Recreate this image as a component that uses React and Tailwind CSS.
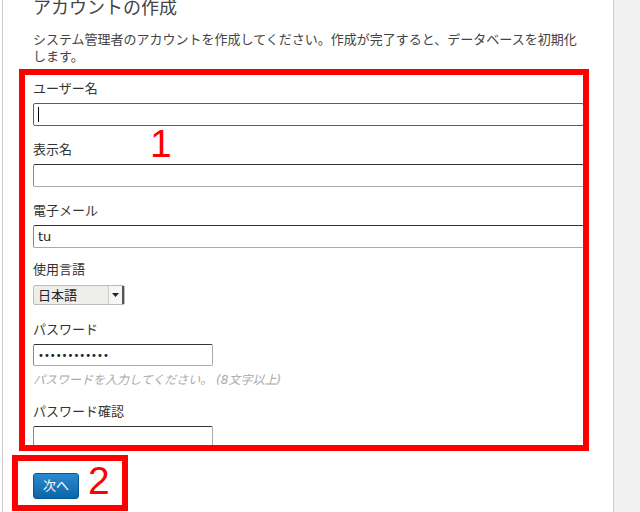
export default function App() {
  const font = { fontFamily: '"DejaVu Sans", "Noto Sans CJK JP", sans-serif' };

  return (
    <div className="relative flex h-[512px] w-[640px] overflow-hidden bg-[#f1f1f1]" style={font}>
      <div className="w-[2px] bg-white" />
      <div className="w-[612px] border-x border-[#cccccc] bg-white pl-[30px] pr-[29px]">
        {/* Title */}
        <h1 className="-mt-[2px] text-[18px] leading-[20px] text-[#444]">アカウントの作成</h1>
        <p className="mt-[13px] text-[13px] leading-[17px] text-[#444]">
          システム管理者のアカウントを作成してください。作成が完了すると、データベースを初期化します。
        </p>

        {/* Username (focused) */}
        <label className="mt-[15px] block text-[13px] leading-[18px] text-[#333]">ユーザー名</label>
        <div className="mt-[5px] flex h-[23px] items-center rounded-[2px] border border-[#1f6fa8] px-[4px]">
          <span className="h-[15px] w-[1px] bg-black" />
        </div>

        {/* Display name */}
        <label className="mt-[15px] block text-[13px] leading-[18px] text-[#333]">表示名</label>
        <div className="mt-[5px] h-[23px] rounded-[2px] border border-[#aaa] border-t-[#333] border-l-[#888]" />

        {/* Email */}
        <label className="mt-[15px] block text-[13px] leading-[18px] text-[#333]">電子メール</label>
        <div className="mt-[5px] flex h-[23px] items-center rounded-[2px] border border-[#aaa] border-t-[#333] border-l-[#888] px-[4px] text-[13px] text-[#222]">
          tu
        </div>

        {/* Language */}
        <label className="mt-[13px] block text-[13px] leading-[18px] text-[#333]">使用言語</label>
        <div className="mt-[6px] flex h-[20px] w-[92px] items-center rounded-[2px] border border-[#bbb] bg-[#ededeb] text-[13px] text-[#222]">
          <span className="flex-1 pl-[4px] leading-none">日本語</span>
          <span className="flex h-full w-[16px] items-center justify-center border-l border-[#ccc] border-r-2 border-r-[#555] bg-[#f6f6f4]">
            <svg width="7" height="4" viewBox="0 0 7 4">
              <path d="M0 0h7L3.5 4z" fill="#222" />
            </svg>
          </span>
        </div>

        {/* Password */}
        <label className="mt-[16px] block text-[13px] leading-[18px] text-[#333]">パスワード</label>
        <div className="mt-[5px] flex h-[22px] w-[180px] items-center rounded-[2px] border border-[#aaa] border-t-[#333] border-l-[#888] px-[4px] text-[10px] text-[#222]">
          ••••••••••••
        </div>
        <p className="mt-[6px] text-[12px] italic leading-[16px] text-[#aaa]">
          パスワードを入力してください。 <span className="text-[12px]">(8文字以上)</span>
        </p>

        {/* Password confirm */}
        <label className="mt-[15px] block text-[13px] leading-[18px] text-[#333]">パスワード確認</label>
        <div className="mt-[5px] h-[23px] w-[180px] rounded-[2px] border border-[#aaa] border-t-[#333] border-l-[#888]" />

        <button className="mt-[24px] flex h-[26px] w-[46px] items-center justify-center rounded-[3px] border border-[#00588f] bg-gradient-to-b from-[#2a8ad0] to-[#0a66a8] text-[13px] text-white">
          次へ
        </button>
      </div>
      <div className="flex-1" />

      {/* Annotations */}
      <div className="absolute left-[19px] top-[69px] h-[382px] w-[570px] border-[6px] border-[#ff0000]" />
      <div className="absolute left-[12px] top-[455px] h-[56px] w-[116px] border-[6px] border-[#ff0000]" />
      <span className="absolute left-[150px] top-[122px] text-[39px] leading-[44px] text-[#ff0000]" style={{ fontFamily: '"Liberation Sans", sans-serif' }}>
        1
      </span>
      <span className="absolute left-[88px] top-[459px] text-[39px] leading-[44px] text-[#ff0000]" style={{ fontFamily: '"Liberation Sans", sans-serif' }}>
        2
      </span>
    </div>
  );
}
